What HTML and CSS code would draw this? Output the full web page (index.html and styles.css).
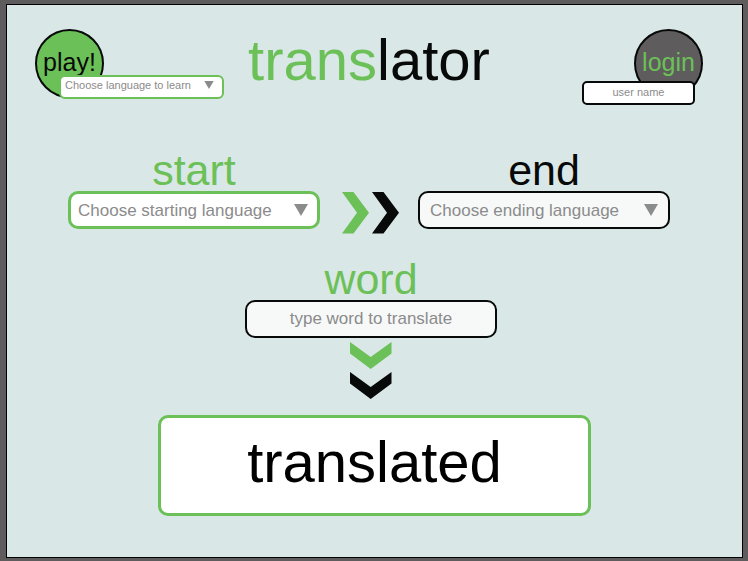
FILE: index.html
```html
<!DOCTYPE html>
<html lang="en">
<head>
  <meta charset="utf-8">
  <meta name="viewport" content="width=device-width, initial-scale=1">
  <title>translator</title>
  <link rel="stylesheet" href="styles.css">
</head>
<body>
  <div class="panel">
    <header class="header">
      <div class="corner corner-play">
        <button class="circle circle-play" type="button">play!</button>
        <div class="picker picker-small">
          <select class="control" aria-label="Language to learn">
            <option>Choose language to learn</option>
          </select>
          <svg class="arrow" viewBox="0 0 14 12" aria-hidden="true"><path d="M0 0H14L7 12Z"/></svg>
        </div>
      </div>
      <h1 class="title"><span class="accent">trans</span>lator</h1>
      <div class="corner corner-login">
        <button class="circle circle-login" type="button">login</button>
        <input class="control user-name" type="text" placeholder="user name" aria-label="User name">
      </div>
    </header>

    <main>
      <div class="languages">
        <div class="field">
          <label class="label accent" for="start">start</label>
          <div class="picker picker-start">
            <select class="control" id="start">
              <option>Choose starting language</option>
            </select>
            <svg class="arrow" viewBox="0 0 14 12" aria-hidden="true"><path d="M0 0H14L7 12Z"/></svg>
          </div>
        </div>
        <svg class="chevrons-right" viewBox="0 0 60 42" aria-hidden="true">
          <path class="fill-accent" d="M3 0H14.5L30 20.7L14.5 41.5H3L18 20.7Z"/>
          <path class="fill-black" d="M33 0H44.5L60 20.7L44.5 41.5H33L48 20.7Z"/>
        </svg>
        <div class="field">
          <label class="label" for="end">end</label>
          <div class="picker picker-end">
            <select class="control" id="end">
              <option>Choose ending language</option>
            </select>
            <svg class="arrow" viewBox="0 0 14 12" aria-hidden="true"><path d="M0 0H14L7 12Z"/></svg>
          </div>
        </div>
      </div>

      <div class="word">
        <div class="field">
          <label class="label accent" for="word">word</label>
          <input class="control word-input" id="word" type="text" placeholder="type word to translate">
        </div>
        <svg class="chevrons-down" viewBox="0 0 42 57" aria-hidden="true">
          <path class="fill-accent" d="M0 0L20.7 15L41.5 0V11.5L20.7 27L0 11.5Z"/>
          <path class="fill-black" d="M0 30L20.7 45L41.5 30V41.5L20.7 57L0 41.5Z"/>
        </svg>
      </div>

      <output class="result" for="start end word">translated</output>
    </main>
  </div>
</body>
</html>
```

FILE: styles.css
```css
:root {
  --green: #6cc058;
  --black: #080a09;
  --gray: #8b8b8b;
  --slate: #5e5c5c;
  --mist: #d9e7e6;
  --paper: #f7f9f9;
}

* {
  box-sizing: border-box;
}

body {
  display: flex;
  min-height: 100vh;
  margin: 0;
  padding: 4px 5px 3px 6px;
  background: var(--slate);
  color: var(--black);
  font-family: "Liberation Sans", Arial, sans-serif;
}

.panel {
  flex: 1;
  border: 1px solid #000;
  background: var(--mist);
}

.accent {
  color: var(--green);
}

.fill-accent {
  fill: var(--green);
}

.fill-black {
  fill: var(--black);
}

/* Header */

.header {
  display: grid;
  grid-template-columns: 1fr auto 1fr;
  align-items: start;
  padding: 24px 39px 0 28px;
}

.corner {
  display: flex;
  flex-direction: column;
}

.corner-login {
  align-items: flex-end;
}

.circle {
  width: 69px;
  height: 69px;
  padding: 0 0 4px;
  border: 2px solid var(--black);
  border-radius: 50%;
  font: 25px/30px "Liberation Sans", Arial, sans-serif;
}

.circle-play {
  background: var(--green);
  color: var(--black);
}

.circle-login {
  background: var(--slate);
  color: var(--green);
}

.title {
  margin: 0;
  font-size: 58px;
  font-weight: 400;
  line-height: 62px;
}

/* Form controls */

.control {
  width: 100%;
  height: 38px;
  margin: 0;
  border: 2px solid var(--black);
  border-radius: 10px;
  background: var(--paper);
  color: var(--gray);
  font: 17px "Liberation Sans", Arial, sans-serif;
  appearance: none;
}

.control::placeholder {
  color: var(--gray);
  opacity: 1;
}

.picker {
  display: grid;
  align-items: center;
}

.picker > * {
  grid-area: 1 / 1;
}

.arrow {
  width: 14px;
  height: 12px;
  margin-right: 12px;
  justify-self: end;
  fill: var(--gray);
  pointer-events: none;
}

.picker-start .control {
  padding: 0 30px 0 7px;
  border: 3px solid var(--green);
  background: #fff;
}

.picker-end .control {
  padding: 0 30px 0 10px;
}

/* The small controls overlap the lower edge of the circles. */

.picker-small {
  z-index: 1;
  width: 165px;
  margin: -23px 0 0 24px;
}

.picker-small .control {
  height: 24px;
  padding: 0 20px 4px 4px;
  border-color: var(--green);
  border-radius: 6px;
  background: #fff;
  font-size: 11px;
}

.picker-small .arrow {
  width: 10px;
  height: 8px;
  margin: 0 10px 4px 0;
}

.user-name {
  z-index: 1;
  width: 113px;
  height: 24px;
  margin: -17px 8px 0 0;
  padding: 0 0 2px;
  border-radius: 5px;
  background: #fff;
  font-size: 11px;
  text-align: center;
}

/* Translation form */

.languages {
  display: flex;
  justify-content: center;
  align-items: flex-end;
  gap: 19px;
  padding: 45px 39px 0 28px;
}

.field {
  display: flex;
  flex: 0 1 252px;
  flex-direction: column;
  gap: 1px;
}

.languages .field {
  margin-bottom: 5px;
}

.label {
  font-size: 43px;
  line-height: 40px;
  text-align: center;
}

.chevrons-right {
  flex: none;
  width: 60px;
  height: 42px;
}

.word {
  display: flex;
  flex-direction: column;
  align-items: center;
  padding: 25px 35px 0 28px;
}

.word .field {
  flex: none;
  width: 252px;
}

.word-input {
  padding: 0;
  text-align: center;
}

.chevrons-down {
  width: 42px;
  height: 57px;
  margin-top: 4px;
}

.result {
  display: block;
  width: 59%;
  margin: 16px auto 24px;
  padding: 13px 16px 20px;
  border: 3px solid var(--green);
  border-radius: 10px;
  background: #fff;
  color: #000;
  font-size: 58px;
  line-height: 62px;
  text-align: center;
}
```
